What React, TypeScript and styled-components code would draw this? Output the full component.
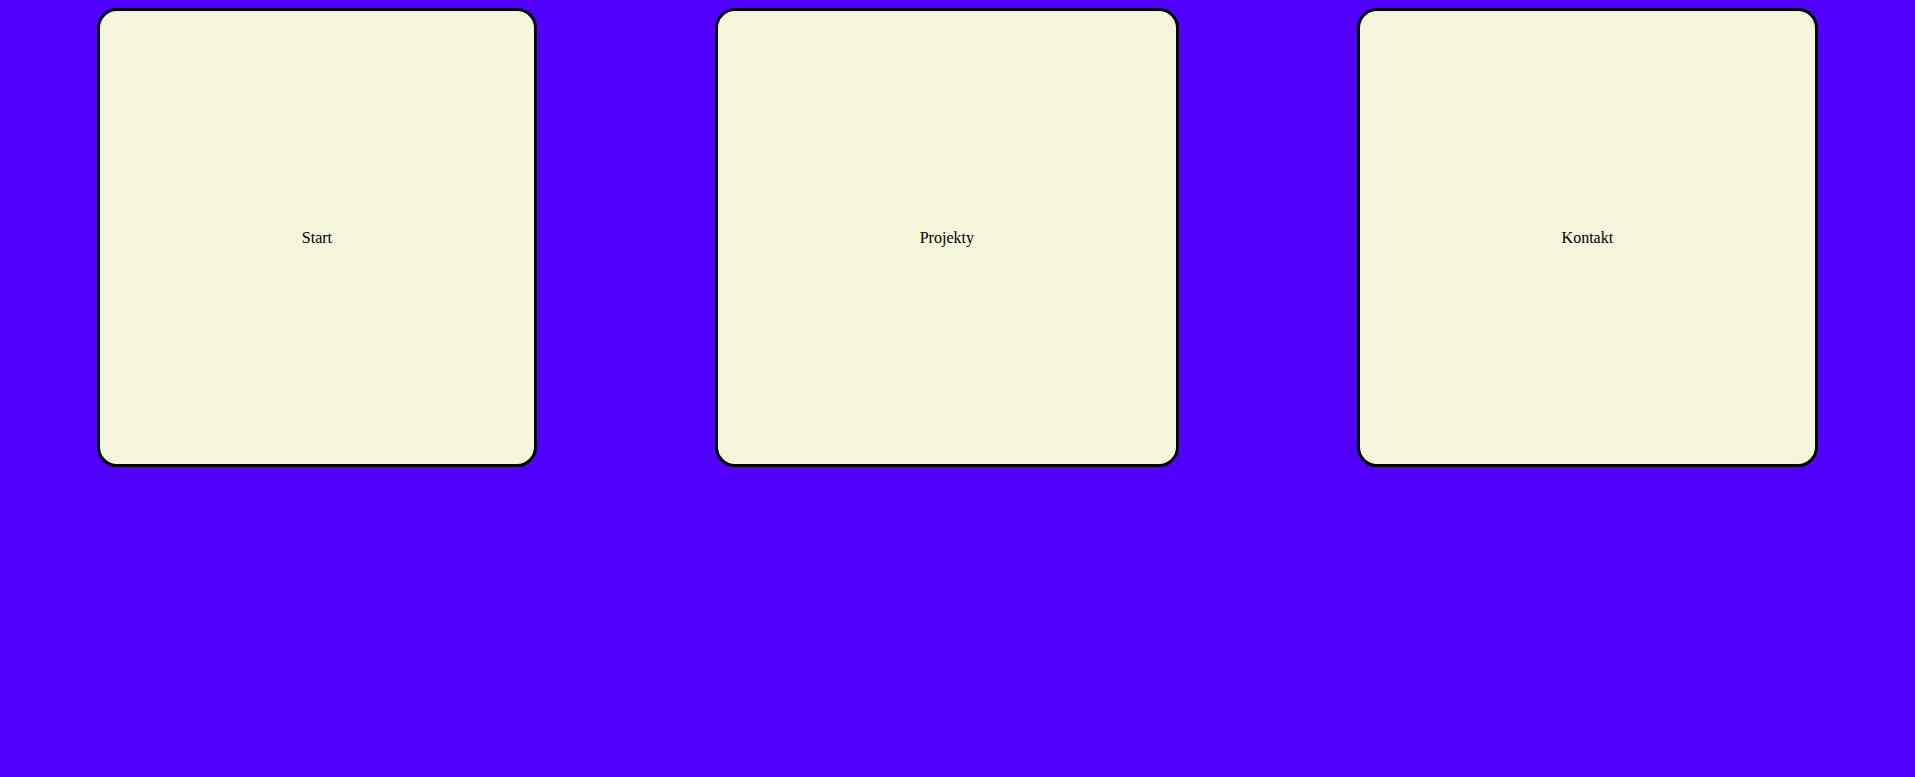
import React from "react";
import styled, { createGlobalStyle } from "styled-components";

const GlobalStyle = createGlobalStyle`
  html, body {
    margin: 0;
    padding: 0;
  }
  body {
    margin: 8px;
    background: #5200ff;
    font-family: "Liberation Serif", "Times New Roman", serif;
    font-size: 16px;
  }
`;

const Row = styled.nav`
  display: flex;
  justify-content: space-around;
  align-items: flex-start;
`;

const Card = styled.a`
  flex: none;
  box-sizing: border-box;
  height: 459px;
  padding: 0 202px;
  display: flex;
  align-items: center;
  justify-content: center;
  background: #f5f5dc;
  border: 3px solid #000;
  border-radius: 20px;
  color: #000;
  text-decoration: none;
  white-space: nowrap;
`;

export default function App() {
  return (
    <>
      <GlobalStyle />
      <Row>
        <Card href="#start">Start</Card>
        <Card href="#projekty">Projekty</Card>
        <Card href="#kontakt">Kontakt</Card>
      </Row>
    </>
  );
}
